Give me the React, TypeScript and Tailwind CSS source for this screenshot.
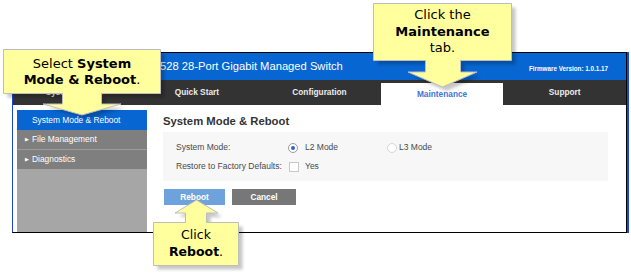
import React from "react";

const ui = { fontFamily: '"Liberation Sans", Arial, sans-serif' };
const callFont = { fontFamily: '"DejaVu Sans", Verdana, sans-serif' };

function Callouts() {
  const shapes = [
    "M3.5,49.5 H160.5 V93.5 H101.5 V104 H121 L82,115 L43,104 H62.5 V93.5 H3.5 Z",
    "M373.5,3.5 H511.5 V60.5 H460.5 V72 H477 L442.5,87 L408,72 H425.5 V60.5 H373.5 Z",
    "M153.5,222.5 H185.5 V213 H175 L196.5,200 L218,213 H206.5 V222.5 H238.5 V265.5 H153.5 Z",
  ];
  return (
    <svg className="absolute left-0 top-0" width={631} height={275}>
      <defs>
        <filter id="blur" x="-10%" y="-10%" width="130%" height="130%">
          <feGaussianBlur stdDeviation="1.6" />
        </filter>
      </defs>
      {shapes.map((d, i) => (
        <path key={"s" + i} d={d} transform="translate(4,4)" fill="rgba(0,0,0,0.22)" filter="url(#blur)" />
      ))}
      {shapes.map((d, i) => (
        <path key={"p" + i} d={d} fill="#ffff9e" stroke="#bdbdbd" strokeWidth={1} />
      ))}
    </svg>
  );
}

function Radio({ checked }: { checked?: boolean }) {
  return (
    <span
      className={
        "w-[10px] h-[10px] rounded-full bg-white border flex items-center justify-center " +
        (checked ? "border-[#9a9a9a]" : "border-[#d6d6d6]")
      }
    >
      {checked && <span className="w-[4px] h-[4px] rounded-full bg-[#2f63c8]" />}
    </span>
  );
}

export default function App() {
  const tabs = ["System Status", "Quick Start", "Configuration", "Maintenance", "Support"];
  return (
    <div className="relative w-[631px] h-[275px] bg-white overflow-hidden" style={ui}>
      <div className="pt-[52px] pl-[12px]">
        <div className="w-[617px] border-r-2 border-r-[#1b45d6]">
          <div className="h-[181px] border-l border-l-[#1b45d6] border-t border-t-black border-b border-b-black border-r border-r-black flex flex-col">
            {/* header */}
            <div className="h-[27px] bg-[#0766d2] flex items-center justify-between text-white">
              <span className="pl-[147px] text-[11.2px] leading-none whitespace-nowrap">
                528 28-Port Gigabit Managed Switch
              </span>
              <span className="pr-[18px] pt-[6px] text-[6.3px] font-bold leading-none whitespace-nowrap">
                Firmware Version: 1.0.1.17
              </span>
            </div>
            {/* nav */}
            <div className="h-[25px] bg-[#333333] grid grid-cols-5">
              {tabs.map((t) =>
                t === "Maintenance" ? (
                  <div key={t} className="mt-[3px] bg-white flex items-center justify-center text-[8.3px] font-bold text-[#3f74d6] pt-[1px]">
                    {t}
                  </div>
                ) : (
                  <div key={t} className="flex items-center justify-center text-[8.3px] font-bold text-[#ececec]">
                    {t}
                  </div>
                )
              )}
            </div>
            {/* body */}
            <div className="flex-1 flex">
              <div className="ml-[4px] mt-[5px] w-[130px] bg-[#a6a6a6] flex flex-col text-[8.4px] text-white">
                <div className="h-[20px] bg-[#0766d2] flex items-center pl-[15px]">System Mode &amp; Reboot</div>
                <div className="h-[20px] bg-[#7f7f7f] border-b border-b-[#9b9b9b] flex items-center pl-[8px] gap-[3px]">
                  <span className="text-[5px]">▶</span>
                  <span>File Management</span>
                </div>
                <div className="h-[19px] bg-[#7f7f7f] flex items-center pl-[8px] gap-[3px]">
                  <span className="text-[5px]">▶</span>
                  <span>Diagnostics</span>
                </div>
              </div>
              <div className="pl-[16px] flex flex-col">
                <div className="mt-[9px] h-[14px] flex items-center text-[11.3px] font-bold text-[#333333]">
                  System Mode &amp; Reboot
                </div>
                <div className="mt-[4px] w-[445px] h-[49px] bg-[#f7f7f7] pt-[6px] pl-[13px] text-[8.5px] text-[#4a4a4a]">
                  <div className="h-[19px] flex items-center">
                    <span className="w-[112px]">System Mode:</span>
                    <span className="w-[99px] flex items-center gap-[7px]">
                      <Radio checked />
                      <span>L2 Mode</span>
                    </span>
                    <span className="flex items-center gap-[2px]">
                      <Radio />
                      <span>L3 Mode</span>
                    </span>
                  </div>
                  <div className="h-[19px] flex items-center">
                    <span className="w-[113px]">Restore to Factory Defaults:</span>
                    <span className="w-[10px] h-[10px] bg-white border border-[#c8c8c8]" />
                    <span className="ml-[6px]">Yes</span>
                  </div>
                </div>
                <div className="mt-[8px] ml-[1px] flex gap-[7px] text-[8.3px] font-bold text-white">
                  <div className="w-[61px] h-[16px] bg-[#6ea2dc] flex items-center justify-center">Reboot</div>
                  <div className="w-[64px] h-[16px] bg-[#777777] flex items-center justify-center">Cancel</div>
                </div>
              </div>
            </div>
          </div>
        </div>
      </div>

      <Callouts />

      <div
        className="absolute left-[4px] top-[50px] w-[156px] h-[43px] flex flex-col items-center justify-center text-[13px] leading-[16px] text-black"
        style={callFont}
      >
        <div>
          Select <b>System</b>
        </div>
        <div>
          <b>Mode &amp; Reboot</b>.
        </div>
      </div>
      <div
        className="absolute left-[374px] top-[4px] w-[137px] h-[56px] flex flex-col items-center justify-center text-[13px] leading-[16.5px] text-black"
        style={callFont}
      >
        <div>Click the</div>
        <div>
          <b>Maintenance</b>
        </div>
        <div>tab.</div>
      </div>
      <div
        className="absolute left-[154px] top-[223px] w-[84px] h-[40px] flex flex-col items-center justify-center text-[12.5px] leading-[17px] text-black"
        style={callFont}
      >
        <div>Click</div>
        <div>
          <b>Reboot</b>.
        </div>
      </div>
    </div>
  );
}
